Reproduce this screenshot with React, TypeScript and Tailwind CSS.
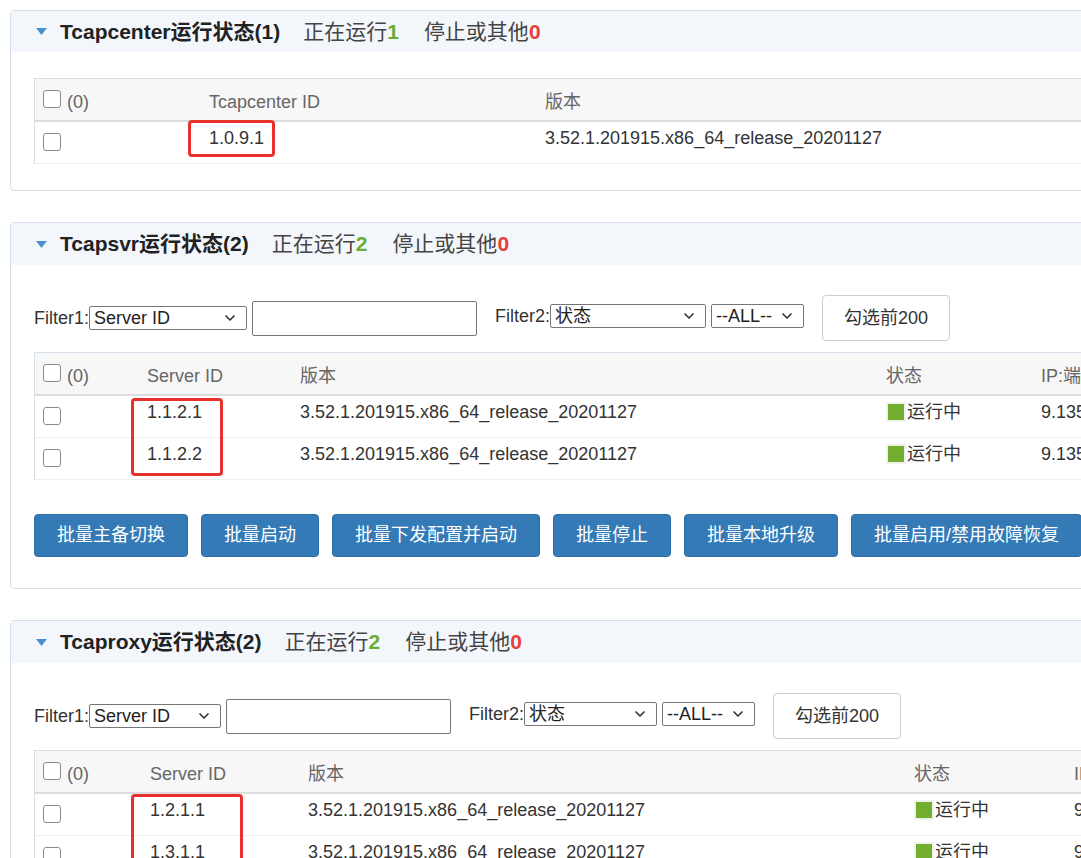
import { ChevronDown } from 'lucide-react';

type Row = { id: string; version: string; ip?: string };

const VERSION = '3.52.1.201915.x86_64_release_20201127';

function Checkbox() {
  return (
    <span className="inline-block h-[18px] w-[18px] shrink-0 rounded-[3px] border border-[#8a8a8a] bg-white" />
  );
}

function Select({ label, width }: { label: string; width: string }) {
  return (
    <div
      className={`flex h-[24px] items-center justify-between rounded-[2px] border border-[#767676] bg-white pl-[4px] pr-[8px] text-[18px] leading-none text-[#222] ${width}`}
    >
      <span>{label}</span>
      <ChevronDown size={16} strokeWidth={2.5} className="text-[#333]" />
    </div>
  );
}

function PanelHeader({
  name,
  total,
  running,
  other,
  height,
}: {
  name: string;
  total: number;
  running: number;
  other: number;
  height: string;
}) {
  return (
    <div className={`flex items-center bg-[#f3f7fc] pl-[25px] text-[21px] ${height}`}>
      <svg width="11" height="7" viewBox="0 0 11 7" className="mr-[13px]">
        <path d="M0 0h11L5.5 7z" fill="#4a90d0" />
      </svg>
      <span className="font-bold text-[#222]">
        {name}运行状态({total})
      </span>
      <span className="ml-[23px] text-[#444]">
        正在运行<span className="font-bold text-[#6aad34]">{running}</span>
      </span>
      <span className="ml-[25px] text-[#444]">
        停止或其他<span className="font-bold text-[#e5403a]">{other}</span>
      </span>
    </div>
  );
}

function FilterRow({ sel1, sel2 }: { sel1: string; sel2: string }) {
  return (
    <div className="flex items-center text-[18px] text-[#333]">
      <span className="leading-none">Filter1:</span>
      <Select label="Server ID" width={sel1} />
      <div className="ml-[5px] h-[35px] w-[225px] rounded-[2px] border border-[#767676] bg-white" />
      <div className="mb-[5px] ml-[18px] flex items-center">
        <span className="leading-none">Filter2:</span>
        <Select label="状态" width={sel2} />
        <div className="ml-[5px]">
          <Select label="--ALL--" width="w-[93px]" />
        </div>
      </div>
      <button className="ml-[18px] h-[46px] w-[128px] rounded-[4px] border border-[#cccccc] bg-white text-[18px] text-[#333]">
        勾选前200
      </button>
    </div>
  );
}

function StatusCell() {
  return (
    <span className="flex items-center">
      <span className="mr-[1px] inline-block h-[20px] w-[20px] border-2 border-[#eef3ea] bg-[#72ad2f]" />
      运行中
    </span>
  );
}

function ServerTable({
  cols,
  idLabel,
  rows,
  withStatus,
}: {
  cols: string[];
  idLabel: string;
  rows: Row[];
  withStatus: boolean;
}) {
  return (
    <div className="border-l border-t border-[#d5dfeb] text-[18px]">
      <div className="flex h-[43px] border-b-2 border-[#dcdcdc] bg-[#f7f7f7] pt-[11px] text-[#666]">
        <div className={`flex items-start gap-[6px] pl-[8px] ${cols[0]}`}>
          <Checkbox />
          <span className="leading-[24px]">(0)</span>
        </div>
        <div className={`pl-[8px] leading-[24px] ${cols[1]}`}>{idLabel}</div>
        <div className={`pl-[8px] leading-[24px] ${cols[2]}`}>版本</div>
        {withStatus && (
          <>
            <div className={`pl-[8px] leading-[24px] ${cols[3]}`}>状态</div>
            <div className="pl-[8px] leading-[24px]">IP:端口</div>
          </>
        )}
      </div>
      {rows.map((r) => (
        <div
          key={r.id}
          className="flex h-[42px] border-b border-[#eeeeee] pt-[4px] text-[#333]"
        >
          <div className={`pl-[8px] pt-[6px] ${cols[0]}`}>
            <Checkbox />
          </div>
          <div className={`pl-[8px] leading-[24px] ${cols[1]}`}>{r.id}</div>
          <div className={`pl-[8px] leading-[24px] ${cols[2]}`}>
            {r.version}
          </div>
          {withStatus && (
            <>
              <div className={`pl-[8px] leading-[24px] ${cols[3]}`}>
                <StatusCell />
              </div>
              <div className="pl-[8px] leading-[24px]">{r.ip}</div>
            </>
          )}
        </div>
      ))}
    </div>
  );
}

const ACTIONS = [
  '批量主备切换',
  '批量启动',
  '批量下发配置并启动',
  '批量停止',
  '批量本地升级',
  '批量启用/禁用故障恢复',
];

function RedMark({ className }: { className: string }) {
  return (
    <div
      className={`pointer-events-none absolute rounded-[4px] border-[3px] border-[#e8302c] ${className}`}
    />
  );
}

export default function App() {
  return (
    <div className="relative h-[858px] w-[1081px] overflow-hidden bg-white pl-[10px] pt-[10px] font-['Liberation_Sans','Noto_Sans_CJK_SC',sans-serif]">
      <div className="flex w-[1220px] flex-col">
        {/* Tcapcenter */}
        <div className="rounded-[4px] border border-[#d5dfeb]">
          <PanelHeader name="Tcapcenter" total={1} running={1} other={0} height="h-[41px]" />
          <div className="pb-[26px] pl-[23px] pt-[26px]">
            <ServerTable
              cols={['w-[166px]', 'w-[336px]', 'flex-1']}
              idLabel="Tcapcenter ID"
              rows={[{ id: '1.0.9.1', version: VERSION }]}
              withStatus={false}
            />
          </div>
        </div>

        {/* Tcapsvr */}
        <div className="mt-[31px] rounded-[4px] border border-[#d5dfeb]">
          <PanelHeader name="Tcapsvr" total={2} running={2} other={0} height="h-[42px]" />
          <div className="pb-[31px] pl-[23px] pt-[30px]">
            <FilterRow sel1="w-[158px]" sel2="w-[156px]" />
            <div className="mt-[11px]">
              <ServerTable
                cols={['w-[104px]', 'w-[153px]', 'w-[586px]', 'w-[155px]']}
                idLabel="Server ID"
                rows={[
                  { id: '1.1.2.1', version: VERSION, ip: '9.135.10.21:9001' },
                  { id: '1.1.2.2', version: VERSION, ip: '9.135.10.21:9002' },
                ]}
                withStatus
              />
            </div>
            <div className="mt-[34px] flex gap-[13px]">
              {ACTIONS.map((a) => (
                <button
                  key={a}
                  className="h-[43px] shrink-0 rounded-[4px] border border-[#2e6da4] bg-[#337ab7] px-[22px] text-[18px] text-white"
                >
                  {a}
                </button>
              ))}
            </div>
          </div>
        </div>

        {/* Tcaproxy */}
        <div className="mt-[31px] rounded-[4px] border border-[#d5dfeb]">
          <PanelHeader name="Tcaproxy" total={2} running={2} other={0} height="h-[42px]" />
          <div className="pb-[31px] pl-[23px] pt-[30px]">
            <FilterRow sel1="w-[132px]" sel2="w-[133px]" />
            <div className="mt-[11px]">
              <ServerTable
                cols={['w-[107px]', 'w-[158px]', 'w-[606px]', 'w-[160px]']}
                idLabel="Server ID"
                rows={[
                  { id: '1.2.1.1', version: VERSION, ip: '9.135.10.21:8001' },
                  { id: '1.3.1.1', version: VERSION, ip: '9.135.10.21:8002' },
                ]}
                withStatus
              />
            </div>
          </div>
        </div>
      </div>

      <RedMark className="left-[188px] top-[120px] h-[37px] w-[87px]" />
      <RedMark className="left-[131px] top-[398px] h-[78px] w-[92px]" />
      <RedMark className="left-[131px] top-[794px] h-[90px] w-[112px]" />
    </div>
  );
}
